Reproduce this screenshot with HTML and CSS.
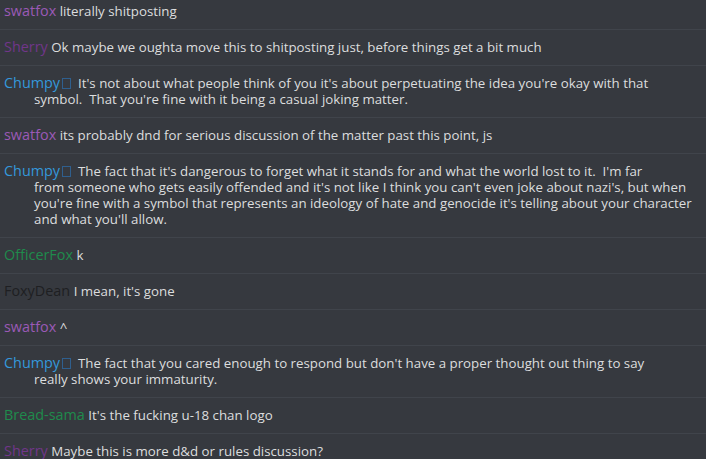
FILE: index.html
```html
<!DOCTYPE html>
<html>
<head>
<meta charset="utf-8">
<link rel="stylesheet" href="styles.css">
</head>
<body>
<div class="chat">
  <div class="msg first"><span class="name purple">swatfox</span> <span class="text">literally shitposting</span></div>
  <div class="msg"><span class="name dpurple">Sherry</span> <span class="text">Ok maybe we oughta move this to shitposting just, before things get a bit much</span></div>
  <div class="msg"><span class="name blue">Chumpy<span class="tofu"></span></span>&nbsp; <span class="text">It's not about what people think of you it's about perpetuating the idea you're okay with that<br>symbol.&nbsp; That you're fine with it being a casual joking matter.</span></div>
  <div class="msg"><span class="name purple">swatfox</span> <span class="text">its probably dnd for serious discussion of the matter past this point, js</span></div>
  <div class="msg"><span class="name blue">Chumpy<span class="tofu"></span></span>&nbsp; <span class="text">The fact that it's dangerous to forget what it stands for and what the world lost to it.&nbsp; I'm far<br>from someone who gets easily offended and it's not like I think you can't even joke about nazi's, but when you're fine with a symbol that represents an ideology of hate and genocide it's telling about your character and what you'll allow.</span></div>
  <div class="msg"><span class="name green">OfficerFox</span> <span class="text">k</span></div>
  <div class="msg"><span class="name dark">FoxyDean</span> <span class="text">I mean, it's gone</span></div>
  <div class="msg"><span class="name purple">swatfox</span> <span class="text">^</span></div>
  <div class="msg"><span class="name blue">Chumpy<span class="tofu"></span></span>&nbsp; <span class="text">The fact that you cared enough to respond but don't have a proper thought out thing to say<br>really shows your immaturity.</span></div>
  <div class="msg"><span class="name green">Bread-sama</span> <span class="text">It's the fucking u-18 chan logo</span></div>
  <div class="msg"><span class="name dpurple">Sherry</span> <span class="text">Maybe this is more d&amp;d or rules discussion?</span></div>
</div>
</body>
</html>
```

FILE: styles.css
```css
html, body {
  margin: 0;
  padding: 0;
  background: #36393f;
  overflow: hidden;
}
body {
  width: 706px;
  height: 459px;
  font-family: "Open Sans", "Noto Sans", sans-serif;
  font-size: 13.3px;
  line-height: 16px;
  color: #dcddde;
}
.chat {
  margin-top: -7px;
}
.msg {
  border-top: 1px solid #40444b;
  padding: 9px 8px 10px 34px;
  text-indent: -30px;
}
.msg.first {
  border-top: none;
  padding-top: 10px;
}
.name {
  font-size: 14.4px;
  font-weight: normal;
}
.purple { color: #9b59b6; }
.dpurple { color: #71368a; }
.blue { color: #3498db; }
.green { color: #1f8b4c; }
.dark { color: #1e1f22; }
.text { color: #dcddde; }
.tofu {
  display: inline-block;
  width: 7px;
  height: 9px;
  border: 1px solid #2f5f8e;
  margin-left: 2px;
  vertical-align: -1px;
  text-indent: 0;
}
```
